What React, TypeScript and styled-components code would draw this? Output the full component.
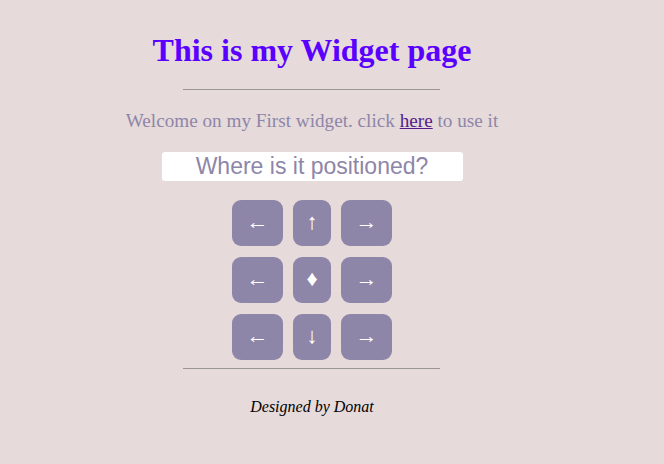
import React from "react";
import styled, { createGlobalStyle } from "styled-components";

const Global = createGlobalStyle`
  html, body { margin: 0; padding: 0; background: #e6dada; }
  body { font-family: "Liberation Serif", serif; }
`;

const Page = styled.main`
  width: 624px;
  display: flex;
  flex-direction: column;
  align-items: center;
  padding-top: 32px;
`;

const Title = styled.h1`
  margin: 0;
  font-family: "Liberation Serif", serif;
  font-size: 32px;
  font-weight: bold;
  color: #5a00ff;
  line-height: 36px;
`;

const Rule = styled.hr<{ $top: number }>`
  width: 257px;
  margin: ${(p) => p.$top}px 1px 0 0;
  border: none;
  border-top: 1px solid #9a9696;
  height: 0;
`;

const Welcome = styled.p`
  margin: 19px 0 0;
  font-size: 19.2px;
  line-height: 24px;
  color: #8e86a9;
`;

const Link = styled.a`
  color: #551a8b;
  text-decoration: underline;
`;

const Position = styled.div`
  margin-top: 19px;
  width: 301px;
  height: 29px;
  background: #ffffff;
  border-radius: 3px;
  font-family: "Liberation Sans", Arial, sans-serif;
  font-size: 23px;
  line-height: 29px;
  color: #8e86a9;
  text-align: center;
`;

const Pad = styled.div`
  margin-top: 19px;
  display: grid;
  grid-template-columns: 51px 38px 51px;
  grid-auto-rows: 46px;
  column-gap: 10px;
  row-gap: 11px;
`;

const Key = styled.button`
  border: none;
  padding: 0 0 3px;
  margin: 0;
  border-radius: 9px;
  background: #8e86a9;
  color: #ffffff;
  font-family: "Liberation Serif", serif;
  font-size: 22px;
  display: flex;
  align-items: center;
  justify-content: center;
`;

const Footer = styled.p`
  margin: 29px 0 0;
  font-style: italic;
  font-size: 16px;
  color: #000;
`;

const keys = ["←", "↑", "→", "←", "♦", "→", "←", "↓", "→"];

export default function App() {
  return (
    <>
      <Global />
      <Page>
        <Title>This is my Widget page</Title>
        <Rule $top={21} />
        <Welcome>
          Welcome on my First widget. click <Link href="#">here</Link> to use it
        </Welcome>
        <Position>Where is it positioned?</Position>
        <Pad>
          {keys.map((k, i) => (
            <Key key={i}>{k}</Key>
          ))}
        </Pad>
        <Rule $top={8} />
        <Footer>Designed by Donat</Footer>
      </Page>
    </>
  );
}
